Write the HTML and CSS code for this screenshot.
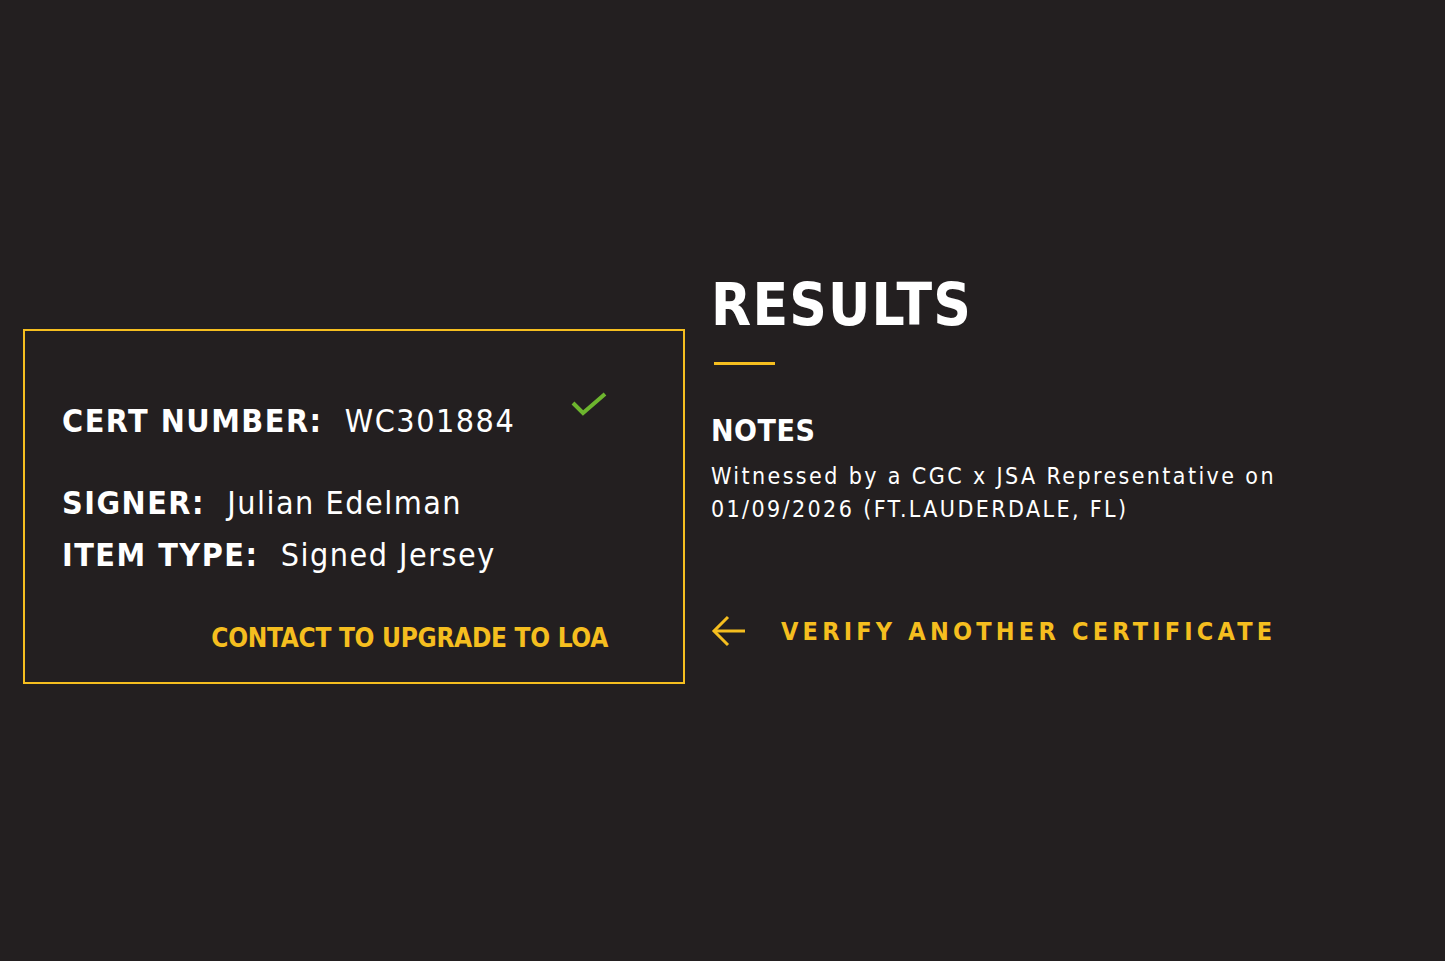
FILE: index.html
```html
<!DOCTYPE html>
<html>
<head>
	<title>Certificate Results</title>
	<link rel="stylesheet" href="styles.css">
</head>
<body>

	<!-- Page wrapper: certificate card on the left, results column on the right -->
	<main class="results-page">

		<!-- Certificate card -->
		<section class="cert-card">
			<div class="cert-row cert-row-first">
				<p class="cert-line"><span class="cert-label">CERT NUMBER:</span> <span class="cert-value">WC301884</span></p>
				<svg class="cert-check" width="38" height="26" viewBox="0 0 38 26">
					<polyline points="3,12 13,22 35,3" fill="none" stroke="#6db52e" stroke-width="4"/>
				</svg>
			</div>
			<p class="cert-line"><span class="cert-label">SIGNER:</span> <span class="cert-value">Julian Edelman</span></p>
			<p class="cert-line"><span class="cert-label">ITEM TYPE:</span> <span class="cert-value">Signed Jersey</span></p>
			<a class="cert-upgrade" href="#">CONTACT TO UPGRADE TO LOA</a>
		</section>

		<!-- Results column -->
		<section class="results">
			<h1 class="results-title">RESULTS</h1>
			<div class="results-rule"></div>
			<h2 class="notes-title">NOTES</h2>
			<p class="notes-text">Witnessed by a CGC x JSA Representative on<br>01/09/2026 (FT.LAUDERDALE, FL)</p>
			<a class="verify-link" href="#">
				<svg width="36" height="34" viewBox="0 0 36 34">
					<polyline points="17,3 3,17 17,31" fill="none" stroke="#f5be1f" stroke-width="3"/>
					<line x1="3" y1="17" x2="34" y2="17" stroke="#f5be1f" stroke-width="3"/>
				</svg>
				<span>VERIFY ANOTHER CERTIFICATE</span>
			</a>
		</section>

	</main>

</body>
</html>
```

FILE: styles.css
```css
/* Dark page background */
body {
	margin: 0;
	background-color: #231f20;
	color: #fff;
	font-family: "DejaVu Sans", sans-serif;
	height: 961px;
	overflow: hidden;
}

/* Two-column layout */
.results-page {
	display: flex;
	align-items: flex-start;
	padding: 272px 0 0 23px;
	gap: 26px;
}

/* Certificate card */
.cert-card {
	box-sizing: border-box;
	width: 662px;
	height: 355px;
	margin-top: 57px;
	padding: 64px 75px 0 37px;
	border: 2px solid #f5be1f;
	display: flex;
	flex-direction: column;
}

.cert-row {
	display: flex;
	justify-content: space-between;
	align-items: flex-start;
}

.cert-line {
	margin: 0;
	font-size: 32px;
	line-height: 52px;
	white-space: nowrap;
}

.cert-row-first {
	margin-bottom: 30px;
}

.cert-label {
	font-family: "DejaVu Sans Condensed", "DejaVu Sans", sans-serif;
	font-stretch: condensed;
	font-weight: bold;
	letter-spacing: 1.5px;
	margin-right: 12px;
}

.cert-value {
	font-family: "DejaVu Sans Condensed", "DejaVu Sans", sans-serif;
	font-stretch: condensed;
	letter-spacing: 1.5px;
}

.cert-check {
	margin-top: -4px;
}

/* Upgrade link at the bottom of the card */
.cert-upgrade {
	align-self: flex-end;
	margin-top: 42px;
	color: #f5be1f;
	text-decoration: none;
	font-family: "DejaVu Sans Condensed", "DejaVu Sans", sans-serif;
	font-stretch: condensed;
	font-weight: bold;
	font-size: 26px;
	letter-spacing: -0.3px;
}

/* Results column */
.results-title {
	margin: 0;
	font-family: "DejaVu Sans Condensed", "DejaVu Sans", sans-serif;
	font-stretch: condensed;
	font-size: 58px;
	line-height: 66px;
	font-weight: bold;
	letter-spacing: 1.2px;
}

.results-rule {
	width: 61px;
	height: 3px;
	margin: 24px 0 0 3px;
	background-color: #f5be1f;
}

.notes-title {
	margin: 48px 0 0;
	font-family: "DejaVu Sans Condensed", "DejaVu Sans", sans-serif;
	font-stretch: condensed;
	font-size: 30px;
	line-height: 36px;
	letter-spacing: 0.5px;
}

.notes-text {
	margin: 11px 0 0;
	font-size: 23px;
	line-height: 33px;
	letter-spacing: 2.4px;
	font-family: "DejaVu Sans Condensed", "DejaVu Sans", sans-serif;
	font-stretch: condensed;
}

/* Back link */
.verify-link {
	display: flex;
	align-items: center;
	gap: 34px;
	margin-top: 88px;
	color: #f5be1f;
	text-decoration: none;
	font-size: 25px;
	font-weight: bold;
	letter-spacing: 4.2px;
	font-family: "DejaVu Sans Condensed", "DejaVu Sans", sans-serif;
	font-stretch: condensed;
}
```
